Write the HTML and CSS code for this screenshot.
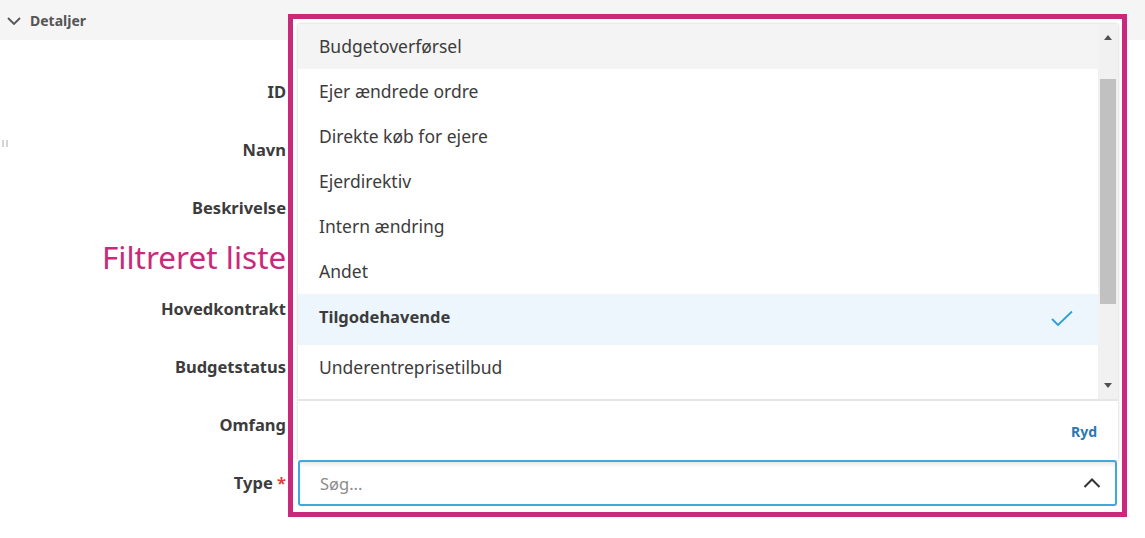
FILE: index.html
```html
<!DOCTYPE html>
<html lang="da">
<head>
<meta charset="utf-8">
<title>Detaljer</title>
<link rel="stylesheet" href="styles.css">
</head>
<body>
<div class="page">
  <div class="section-head">
    <svg class="chev-down" width="14" height="10" viewBox="0 0 14 10"><polyline points="1,2 7,8 13,2" fill="none" stroke="#555" stroke-width="1.8"/></svg>
    <span class="section-title">Detaljer</span>
  </div>
  <div class="grip"></div>
  <div class="form">
    <div class="row"><span class="label">ID</span></div>
    <div class="row"><span class="label">Navn</span></div>
    <div class="row row-tall"><span class="label">Beskrivelse</span></div>
    <div class="row"><span class="label">Hovedkontrakt</span></div>
    <div class="row"><span class="label">Budgetstatus</span></div>
    <div class="row"><span class="label">Omfang</span></div>
    <div class="row"><span class="label">Type <span class="req">*</span></span></div>
  </div>

  <div class="annotation">Filtreret liste</div>

  <div class="frame">
    <div class="panel">
      <div class="list-wrap">
        <ul class="list">
          <li class="item hover">Budgetoverførsel</li>
          <li class="item">Ejer ændrede ordre</li>
          <li class="item">Direkte køb for ejere</li>
          <li class="item">Ejerdirektiv</li>
          <li class="item">Intern ændring</li>
          <li class="item">Andet</li>
          <li class="item selected"><span>Tilgodehavende</span>
            <svg class="check" width="24" height="18" viewBox="0 0 24 18"><polyline points="2,9 8,15 22,1.5" fill="none" stroke="#2a9fd8" stroke-width="1.8"/></svg>
          </li>
          <li class="item">Underentreprisetilbud</li>
        </ul>
        <div class="scrollbar">
          <div class="sb-btn"><span class="tri-up"></span></div>
          <div class="sb-track">
            <div class="sb-thumb"></div>
          </div>
          <div class="sb-btn"><span class="tri-down"></span></div>
        </div>
      </div>
      <div class="footer"><span class="clear">Ryd</span></div>
    </div>
    <div class="search">
      <span class="placeholder">Søg...</span>
      <svg class="chev-up" width="18" height="12" viewBox="0 0 18 12"><polyline points="1.5,10 9,2.5 16.5,10" fill="none" stroke="#333" stroke-width="2"/></svg>
    </div>
  </div>
</div>
</body>
</html>
```
FILE: styles.css
```css
* { box-sizing: border-box; }
html, body { margin: 0; padding: 0; }
body {
  font-family: "Noto Sans", "Open Sans", sans-serif;
  color: #3c3c3c;
  background: #fff;
}
.page {
  position: relative;
  width: 1145px;
  height: 538px;
  overflow: hidden;
}
.section-head {
  height: 40px;
  background: #f5f5f5;
  display: flex;
  align-items: center;
  padding-left: 7px;
  gap: 9px;
}
.chev-down { display: block; margin-top: 1px; }
.section-title {
  font-size: 14px;
  font-weight: 700;
  color: #555;
}
.grip {
  position: absolute;
  left: 2px;
  top: 140px;
  width: 6px;
  height: 7px;
  border-left: 2px solid #d4d4d4;
  border-right: 2px solid #d4d4d4;
}
.form {
  padding-top: 22px;
  display: flex;
  flex-direction: column;
}
.row {
  height: 58px;
  width: 286px;
  display: flex;
  align-items: center;
  justify-content: flex-end;
}
.row-tall {
  margin-bottom: 43px;
}
.label {
  font-size: 16.5px;
  font-weight: 700;
  color: #3c3c3c;
}
.req { color: #e0403a; }

.annotation {
  position: absolute;
  left: 102px;
  top: 236px;
  font-size: 31.5px;
  line-height: 42px;
  color: #c8297a;
  white-space: nowrap;
}

.frame {
  position: absolute;
  left: 288px;
  top: 14px;
  width: 839px;
  height: 503px;
  border: 5px solid #c8297a;
  background: #fff;
  padding: 5px 4px 6px 5px;
  display: flex;
  flex-direction: column;
}
.panel {
  height: 436px;
  box-shadow: 0 0 3px rgba(0,0,0,0.22);
  display: flex;
  flex-direction: column;
  background: #fff;
}
.list-wrap {
  height: 377px;
  display: flex;
  border-bottom: 2px solid #e6e6e6;
}
.list {
  list-style: none;
  margin: 0;
  padding: 0;
  flex: 1;
  overflow: hidden;
}
.item {
  height: 45px;
  padding-left: 21px;
  padding-bottom: 2px;
  font-size: 17.5px;
  display: flex;
  align-items: center;
  color: #3c3c3c;
}
.item.hover { background: #f4f4f4; }
.item.selected {
  background: #edf6fc;
  font-weight: 700;
  font-size: 16.5px;
  height: 51px;
  padding-bottom: 7px;
  justify-content: space-between;
  padding-right: 24px;
}
.check { display: block; margin-top: 5px; }
.scrollbar {
  width: 20px;
  background: #f1f1f1;
  display: flex;
  flex-direction: column;
}
.sb-btn {
  height: 22px;
  display: flex;
  align-items: center;
  justify-content: center;
}
.tri-up, .tri-down {
  width: 0; height: 0;
  border-left: 4px solid transparent;
  border-right: 4px solid transparent;
}
.tri-up { border-bottom: 5px solid #505050; margin-top: 4px; }
.tri-down { border-top: 5px solid #505050; margin-top: -6px; }
.sb-track {
  flex: 1;
  padding: 33px 2px 0 2px;
}
.sb-thumb {
  height: 225px;
  background: #c1c1c1;
}
.footer {
  flex: 1;
  display: flex;
  align-items: center;
  justify-content: flex-end;
  padding-right: 21px;
  padding-top: 1px;
}
.clear {
  font-size: 14px;
  font-weight: 700;
  color: #2b77b4;
}
.search {
  height: 46px;
  margin-right: 1px;
  border: 2px solid #3fa9dc;
  border-radius: 3px;
  box-shadow: inset 0 5px 5px -3px rgba(0,0,0,0.10);
  display: flex;
  align-items: center;
  justify-content: space-between;
  padding-left: 20px;
  padding-right: 14px;
}
.placeholder {
  font-size: 16.5px;
  color: #8c8c8c;
}
.chev-up { display: block; }
```
